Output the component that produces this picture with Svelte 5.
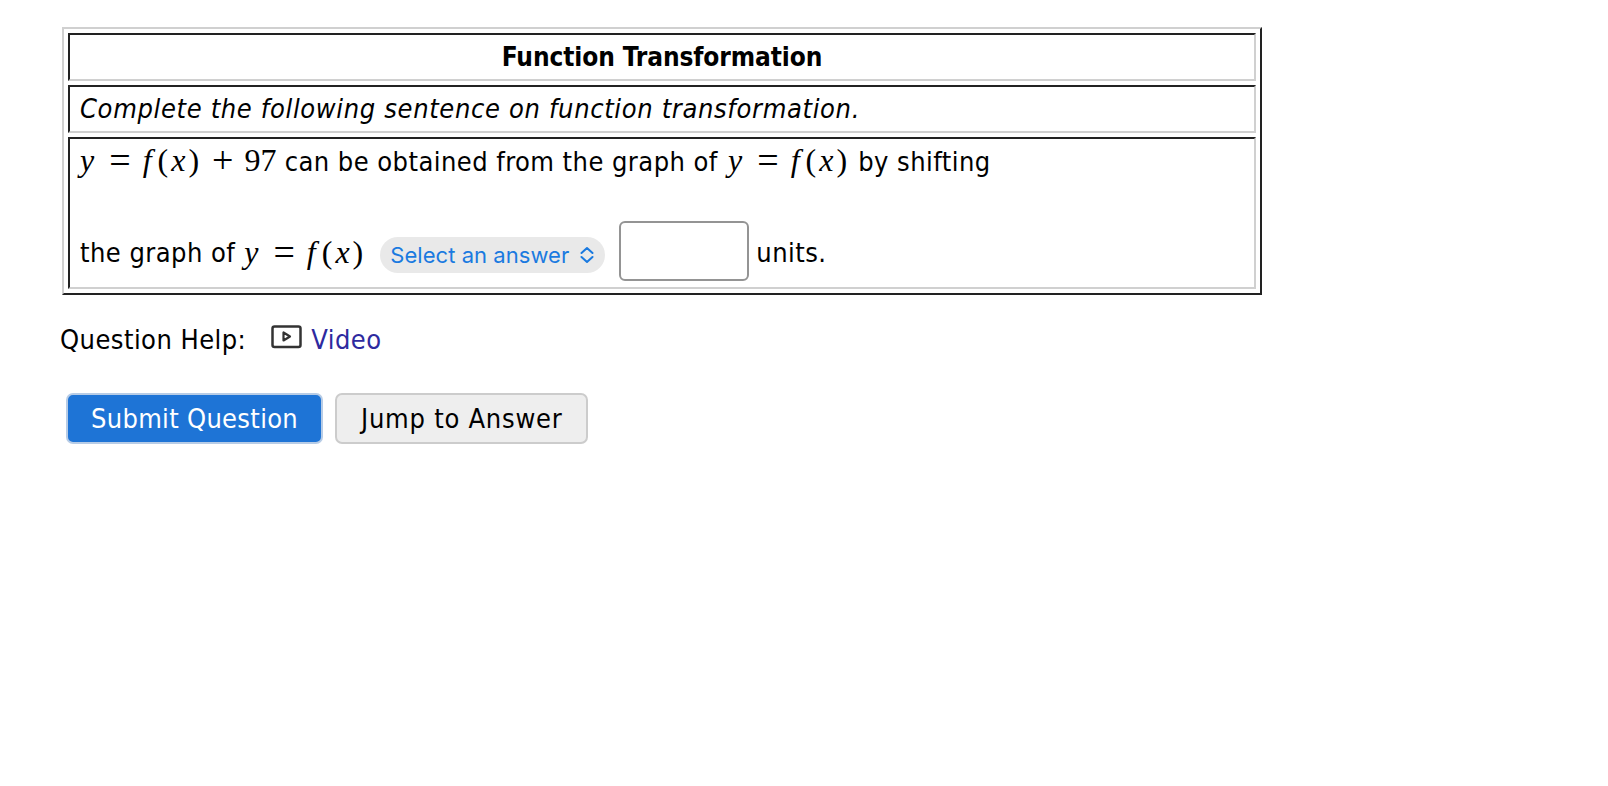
<script>
  // one question prompt with its help link and action buttons
  let answer = $state('');
</script>

{#snippet fx()}<span class="math mid"><i>y</i><span class="eq">=</span><i class="f">f</i><span class="par">(</span><i>x</i><span class="par">)</span></span>{/snippet}

<main class="page">
  <table class="question">
    <tbody>
      <tr><th>Function Transformation</th></tr>
      <tr><td class="intro"><em>Complete the following sentence on function transformation.</em></td></tr>
      <tr>
        <td class="body">
          <p class="first">
            <span class="math"><i>y</i><span class="eq">=</span><i class="f">f</i><span class="par">(</span><i>x</i><span class="par">)</span><span class="eq plus">+</span>97</span>
            can be obtained from the graph of {@render fx()} by shifting
          </p>
          <p class="second">
            <span class="lead">the graph of</span>
            {@render fx()}
            <span class="select">Select an answer
              <svg width="16" height="18" viewBox="0 0 16 18" fill="none" stroke="currentColor" stroke-width="2" stroke-linecap="round" stroke-linejoin="round">
                <path d="M2.500 7 8 2l5.500 5M2.500 11 8 16l5.500-5" />
              </svg>
            </span>
            <input type="text" bind:value={answer} aria-label="Units" />
            <span class="lead">units.</span>
          </p>
        </td>
      </tr>
    </tbody>
  </table>

  <div class="help">
    <span>Question Help:</span>
    <svg class="video-icon" width="31" height="24" viewBox="0 0 31 24" fill="none">
      <rect x="1.500" y="1.500" width="28" height="20.500" rx="2" stroke="#333" stroke-width="2.500" />
      <path d="M12.500 7.500v8l6.500-4z" stroke="#333" stroke-width="2.200" stroke-linejoin="round" />
    </svg>
    <a href="#video">Video</a>
  </div>

  <div class="actions">
    <button type="button" class="primary">Submit Question</button>
    <button type="button" class="jump">Jump to Answer</button>
  </div>
</main>

<style>
  :global(body) {
    background: #fff;
    color: #000;
    font-family: "DejaVu Sans", sans-serif;
    font-stretch: condensed;
    font-size: 27px;
    letter-spacing: 0.45px;
  }
  .page {
    padding: 27px 0 0 60px;
  }
  .question {
    width: 1200px;
    margin-left: 2px;
    border-collapse: separate;
    border-spacing: 4px;
    border: 2px solid;
    border-color: #d0d0d0 #222 #222 #d0d0d0;
  }
  th,
  td {
    border: 2px solid;
    border-color: #222 #d0d0d0 #d0d0d0 #222;
    padding: 0 10px;
    line-height: 44px;
    font-size: 27px;
  }
  th {
    font-size: 26px;
    letter-spacing: -0.1px;
  }
  em {
    letter-spacing: 0.65px;
  }
  .body {
    padding-bottom: 6px;
  }
  p {
    margin: 0;
  }
  .first {
    height: 81px;
    padding-top: 1px;
  }
  .second {
    display: flex;
    align-items: center;
    height: 60px;
  }
  .lead {
    padding-top: 4px;
  }
  .second .lead:first-child {
    margin-right: 7px;
  }
  .math {
    font-family: "Liberation Serif", serif;
    font-size: 32px;
    line-height: 1;
    letter-spacing: 0;
    white-space: pre;
  }
  .second .math {
    padding-top: 2px;
  }
  .mid {
    margin-left: 2px;
  }
  .math i {
    margin-right: 3px;
  }
  .math .f {
    margin-right: 6px;
  }
  .par {
    margin-right: 3px;
  }
  .eq {
    margin: 0 12px;
    font-size: 38px;
    line-height: 0;
    vertical-align: -2px;
  }
  .plus {
    margin: 0 11px 0 10px;
  }
  .select {
    display: inline-flex;
    align-items: center;
    gap: 10px;
    height: 36px;
    margin: 8px 14px 0 14px;
    padding: 0 10px;
    border-radius: 18px;
    background: #e9e9e9;
    color: #1a7ae0;
    font-family: Inter, sans-serif;
    font-stretch: normal;
    font-size: 22px;
    letter-spacing: 0.05px;
  }
  input {
    box-sizing: border-box;
    width: 130px;
    height: 60px;
    margin-right: 7px;
    border: 2px solid #949494;
    border-radius: 6px;
    background: #fff;
  }
  .help {
    display: flex;
    align-items: center;
    height: 36px;
    margin-top: 26px;
  }
  .video-icon {
    margin: -4px 9px 0 25px;
  }
  a {
    color: #2e2a9f;
    text-decoration: none;
  }
  .actions {
    display: flex;
    gap: 12px;
    margin: 36px 0 0 6px;
  }
  button {
    box-sizing: border-box;
    height: 51px;
    padding: 0 23px;
    border: 2px solid #ccc;
    border-radius: 7px;
    background: #eee;
    color: #000;
    font: inherit;
  }
  .primary {
    border-color: #b7cce6;
    background: #1e74d6;
    color: #fff;
    letter-spacing: 0.3px;
  }
  .jump {
    padding: 0 24px;
    letter-spacing: 0.75px;
  }
</style>
